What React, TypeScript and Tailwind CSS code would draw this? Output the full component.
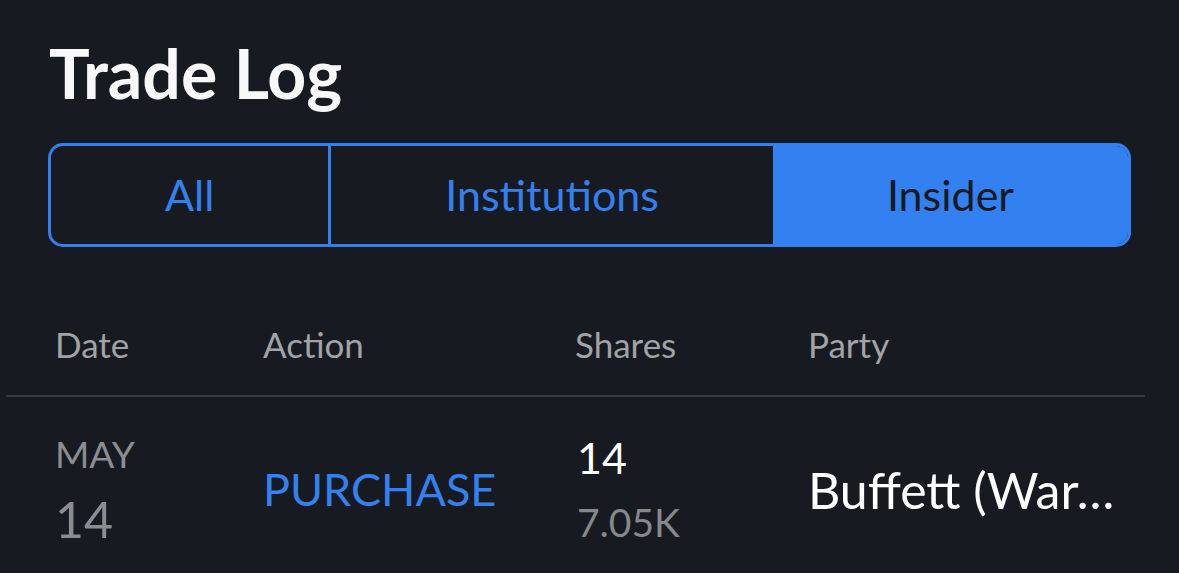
export default function App() {
  return (
    <div
      className="w-[1179px] h-[573px] overflow-hidden bg-[#171a21]"
      style={{ fontFamily: "Lato, 'Noto Sans', sans-serif" }}
    >
      <div className="pt-[40px] pl-[49px]">
        <h1 className="text-[68px] leading-[66px] font-bold text-[#f8f8f8]">Trade Log</h1>
      </div>
      <div className="mt-[37px] ml-[48px] w-[1083px] h-[104px] flex rounded-[15px] border-[3px] border-[#3380f0] overflow-hidden">
        <div className="flex-auto flex items-center justify-center border-r-[3px] border-[#3380f0] text-[43px] text-[#3380f0]">
          All
        </div>
        <div className="flex-auto flex items-center justify-center text-[43px] text-[#3380f0]">
          Institutions
        </div>
        <div className="flex-auto flex items-center justify-center bg-[#3380f0] text-[43px] text-[#171a21]">
          Insider
        </div>
      </div>
      <div className="mt-[80px] ml-[6px] w-[1139px]">
        <div className="grid grid-cols-[208px_312px_233px_1fr] pl-[49px] pb-[34px] border-b-2 border-[#34373e] text-[35px] leading-[34px] text-[#a1a3a7]">
          <div>Date</div>
          <div>Action</div>
          <div>Shares</div>
          <div>Party</div>
        </div>
        <div className="grid grid-cols-[208px_312px_233px_1fr] items-center pl-[49px] pt-[38px]">
          <div className="flex flex-col gap-[21px] text-[#8b8d91]">
            <div className="text-[37px] leading-[38px]">MAY</div>
            <div className="text-[50px] leading-[50px]">14</div>
          </div>
          <div className="text-[45px] leading-[47px] text-[#3380f0]">PURCHASE</div>
          <div className="flex flex-col gap-[23px] pl-[2px]">
            <div className="text-[43px] leading-[43px] text-[#ffffff]">14</div>
            <div className="text-[39px] leading-[41px] text-[#86888c]">7.05K</div>
          </div>
          <div className="min-w-0">
            <div className="text-[50px] leading-[48px] text-[#ffffff] whitespace-nowrap">Buffett (War…</div>
          </div>
        </div>
      </div>
    </div>
  );
}
